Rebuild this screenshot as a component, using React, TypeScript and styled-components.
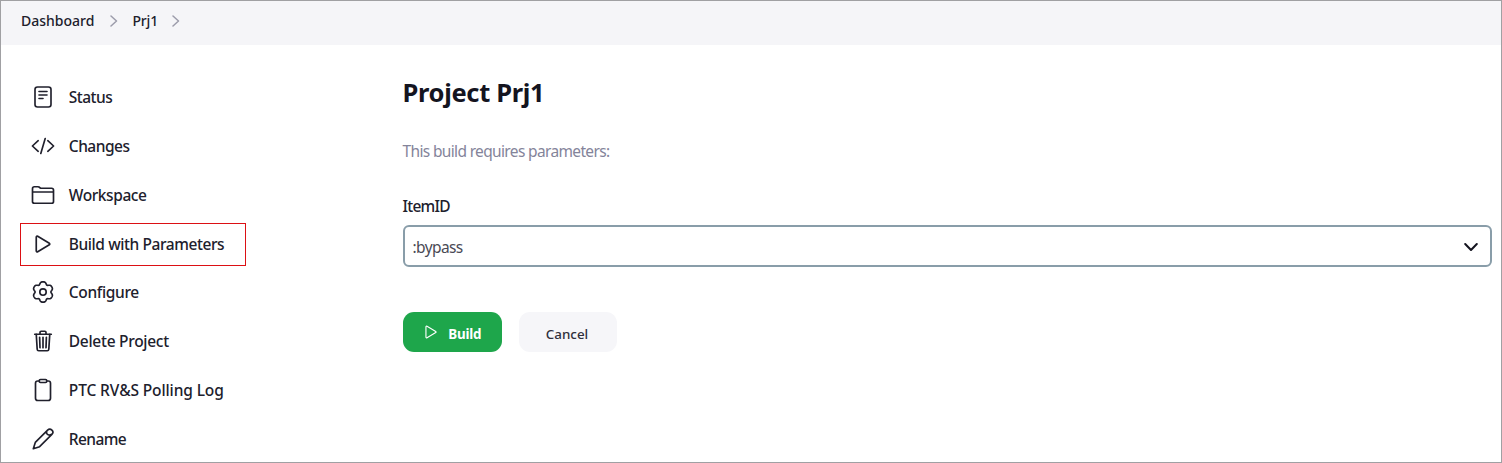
import React from 'react';
import styled, { createGlobalStyle } from 'styled-components';
import {
  IoTrashOutline,
  IoFolderOutline,
  IoClipboardOutline,
  IoPlayOutline,
} from 'react-icons/io5';

const GlobalStyle = createGlobalStyle`
  * { box-sizing: border-box; }
  body {
    margin: 0;
    background: #fff;
    color: #20202c;
    font-family: "Noto Sans", "Open Sans", sans-serif;
  }
`;

const Page = styled.div`
  width: 100%;
  height: 463px;
  overflow: hidden;
  border: 1px solid #a0a0a3;
  display: flex;
  flex-direction: column;
`;

const Breadcrumbs = styled.nav`
  height: 44px;
  flex: none;
  background: #f5f5f8;
  display: flex;
  align-items: center;
  padding: 0 20px 5px;
  font-size: 14px;
  font-weight: 500;
`;

const Crumb = styled.span<{ $width: number; $spacing: string }>`
  width: ${(p) => p.$width}px;
  letter-spacing: ${(p) => p.$spacing};
  white-space: nowrap;
`;

const Separator = styled.svg`
  width: 8px;
  height: 12px;
  margin: 1px 15px 0 15.5px;
  fill: none;
  stroke: #9c9cab;
  stroke-width: 1.5;
  stroke-linecap: round;
  stroke-linejoin: round;
`;

const Body = styled.div`
  flex: 1;
  min-height: 0;
  display: flex;
`;

const Sidebar = styled.aside`
  width: 401.5px;
  flex: none;
  display: flex;
  flex-direction: column;
  align-items: flex-start;
  gap: 5.75px;
  padding: 31.75px 0 0 19px;
`;

const Task = styled.div<{ $active?: boolean }>`
  height: 43px;
  flex: none;
  width: 226px;
  display: flex;
  align-items: center;
  gap: 13.8px;
  padding: 0 0 2px 10px;
  border: 1px solid ${(p) => (p.$active ? '#dc1014' : 'transparent')};
  white-space: nowrap;

  svg {
    width: 24px;
    height: 24px;
    flex: none;
  }

  svg path,
  svg rect {
    stroke-width: 36;
  }
`;

const TaskLabel = styled.span<{ $spacing: number }>`
  font-size: 15.5px;
  line-height: 22px;
  font-weight: 500;
  letter-spacing: ${(p) => p.$spacing}px;
`;

const LineIcon = styled.svg`
  fill: none;
  stroke: currentColor;
  stroke-linecap: round;
  stroke-linejoin: round;

  && path,
  && rect,
  && circle {
    stroke-width: 1.65;
  }
`;

const Main = styled.main`
  flex: 1;
  padding: 29px 9px 0 0;
`;

const Title = styled.h1`
  margin: 0;
  font-size: 25.5px;
  line-height: 36px;
  font-weight: 700;
  letter-spacing: -0.33px;
  color: #14141f;
`;

const Description = styled.p`
  margin: 29px 0 0;
  font-size: 15.5px;
  line-height: 24px;
  letter-spacing: -0.65px;
  color: #84849a;
`;

const FieldLabel = styled.div`
  margin-top: 31px;
  font-size: 15.5px;
  line-height: 24px;
  font-weight: 500;
  letter-spacing: -0.75px;
`;

const Select = styled.div`
  margin-top: 7px;
  height: 42px;
  border: 2px solid #899da9;
  border-radius: 6px;
  display: flex;
  align-items: center;
  justify-content: space-between;
  padding: 2px 12px 0 8px;
  font-size: 15.5px;
  letter-spacing: -0.6px;
  color: #4a4a55;
`;

const SelectArrow = styled.svg`
  width: 14px;
  height: 10px;
  margin-bottom: 1px;
  fill: none;
  stroke: #14141f;
  stroke-width: 2;
  stroke-linecap: round;
  stroke-linejoin: round;
`;

const Actions = styled.div`
  display: flex;
  gap: 17px;
  margin-top: 45px;
`;

const Button = styled.button<{ $primary?: boolean }>`
  width: ${(p) => (p.$primary ? 99 : 98)}px;
  height: 40px;
  border: 0;
  border-radius: 11px;
  padding: 3px 1px 0 0;
  display: flex;
  align-items: center;
  justify-content: center;
  gap: 8.5px;
  background: ${(p) => (p.$primary ? '#1ea64b' : '#f6f6f9')};
  color: ${(p) => (p.$primary ? '#fff' : '#30303c')};
  font-family: inherit;
  font-size: 13.4px;
  letter-spacing: ${(p) => (p.$primary ? -0.2 : 0)}px;
  font-weight: ${(p) => (p.$primary ? 700 : 500)};

  svg {
    width: 18px;
    height: 18px;
    margin-bottom: 3px;
  }
`;

const DocumentIcon = () => (
  <LineIcon viewBox="0 0 24 24">
    <rect x="4" y="2" width="16" height="20" rx="2.5" />
    <path d="M8 6.5h8M8 10h8M8 13.5h4" />
  </LineIcon>
);

const CodeIcon = () => (
  <LineIcon viewBox="0 0 24 24">
    <path d="M7.2 6.7 1.4 12l5.8 5.3M16.8 6.7l5.8 5.3-5.8 5.3M14.2 4.6 9.8 19.4" />
  </LineIcon>
);

const PencilIcon = () => (
  <LineIcon viewBox="0 0 24 24">
    <path d="M2.3 21.7 4.3 15.4 16.6 3.1a3 3 0 0 1 4.3 4.3L8.6 19.7zM16 3.7c-.9 1.8-.3 3.5 1.2 4.1 1.2.5 2.3.2 3.1-.4" />
  </LineIcon>
);

// Six rounded lobes, one pointing straight up, with narrow notches between them.
const gearPath =
  Array.from({ length: 72 }, (_, i) => {
    const a = (i * Math.PI) / 36;
    const r = 9.3 + 1.15 * Math.cos(6 * a) - 0.3 * Math.cos(12 * a);
    const x = (12 + r * Math.sin(a)).toFixed(2);
    const y = (12 - r * Math.cos(a)).toFixed(2);
    return `${i ? 'L' : 'M'}${x} ${y}`;
  }).join('') + 'Z';

const GearIcon = () => (
  <LineIcon viewBox="0 0 24 24">
    <path d={gearPath} />
    <circle cx="12" cy="12" r="3.2" />
  </LineIcon>
);

const BreadcrumbArrow = () => (
  <Separator viewBox="0 0 8 12">
    <path d="M1 1l5.5 5L1 11" />
  </Separator>
);

const tasks = [
  { label: 'Status', icon: <DocumentIcon />, spacing: -0.5 },
  { label: 'Changes', icon: <CodeIcon />, spacing: -0.5 },
  { label: 'Workspace', icon: <IoFolderOutline />, spacing: -0.42 },
  { label: 'Build with Parameters', icon: <IoPlayOutline />, spacing: -0.42, active: true },
  { label: 'Configure', icon: <GearIcon />, spacing: -0.35 },
  { label: 'Delete Project', icon: <IoTrashOutline />, spacing: -0.28 },
  { label: 'PTC RV&S Polling Log', icon: <IoClipboardOutline />, spacing: -0.12 },
  { label: 'Rename', icon: <PencilIcon />, spacing: -0.6 },
];

export default function App() {
  return (
    <>
      <GlobalStyle />
      <Page>
        <Breadcrumbs>
          <Crumb $width={73} $spacing="0">Dashboard</Crumb>
          <BreadcrumbArrow />
          <Crumb $width={24} $spacing="-0.2px">Prj1</Crumb>
          <BreadcrumbArrow />
        </Breadcrumbs>
        <Body>
          <Sidebar>
            {tasks.map((t) => (
              <Task key={t.label} $active={t.active}>
                {t.icon}
                <TaskLabel $spacing={t.spacing}>{t.label}</TaskLabel>
              </Task>
            ))}
          </Sidebar>
          <Main>
            <Title>Project Prj1</Title>
            <Description>This build requires parameters:</Description>
            <FieldLabel>ItemID</FieldLabel>
            <Select>
              :bypass
              <SelectArrow viewBox="0 0 14 10">
                <path d="M1.2 2 7 8l5.8-6" />
              </SelectArrow>
            </Select>
            <Actions>
              <Button $primary>
                <IoPlayOutline />
                Build
              </Button>
              <Button>Cancel</Button>
            </Actions>
          </Main>
        </Body>
      </Page>
    </>
  );
}
